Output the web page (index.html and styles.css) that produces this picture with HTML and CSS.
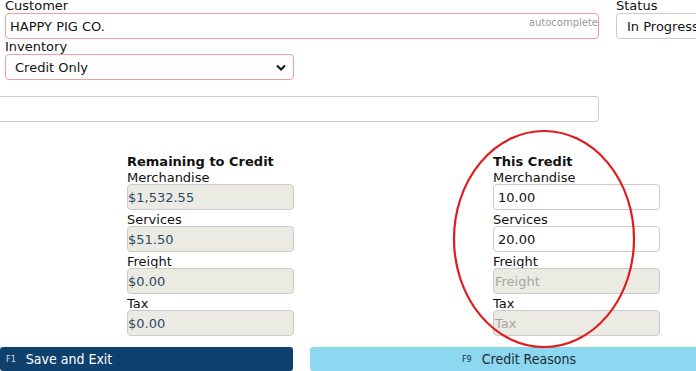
FILE: index.html
```html
<!DOCTYPE html>
<html lang="en">
<head>
  <meta charset="UTF-8">
  <title>Credit</title>
  <link rel="stylesheet" href="styles.css">
</head>
<body>
<div class="page">
  <div class="row-top">
    <div class="field customer">
      <label>Customer</label>
      <div class="box req">
        <span class="val">HAPPY PIG CO.</span>
        <span class="hint">autocomplete</span>
      </div>
    </div>
    <div class="field status">
      <label>Status</label>
      <div class="box"><span class="val">In Progress</span></div>
    </div>
  </div>

  <div class="field inventory">
    <label>Inventory</label>
    <div class="box req select">
      <span class="val">Credit Only</span>
      <svg class="caret" width="10" height="7" viewBox="0 0 10 7"><path d="M1 1.5 L5 5.5 L9 1.5" fill="none" stroke="#111" stroke-width="2"/></svg>
    </div>
  </div>

  <div class="box wide"></div>

  <div class="amounts">
    <div class="col">
      <h3>Remaining to Credit</h3>
      <label>Merchandise</label>
      <div class="box ro">$1,532.55</div>
      <label>Services</label>
      <div class="box ro">$51.50</div>
      <label>Freight</label>
      <div class="box ro">$0.00</div>
      <label>Tax</label>
      <div class="box ro">$0.00</div>
    </div>
    <div class="col marked">
      <h3>This Credit</h3>
      <label>Merchandise</label>
      <div class="box num">10.00</div>
      <label>Services</label>
      <div class="box num">20.00</div>
      <label>Freight</label>
      <div class="box ro ph">Freight</div>
      <label>Tax</label>
      <div class="box ro ph">Tax</div>
      <svg class="circle" width="190" height="224" viewBox="0 0 190 224"><ellipse cx="95" cy="112" rx="90" ry="108" fill="none" stroke="#e3191c" stroke-width="2.2"/></svg>
    </div>
  </div>

  <div class="actions">
    <div class="btn save"><span class="key">F1</span>Save and Exit</div>
    <div class="btn reasons"><span class="key">F9</span>Credit Reasons</div>
  </div>
</div>
</body>
</html>
```

FILE: styles.css
```css
body {
  margin: 0;
  font-family: "DejaVu Sans", Verdana, sans-serif;
  font-size: 13px;
  color: #111;
  background: #fff;
  overflow: hidden;
}
.page {
  margin-top: -2px;
  padding-left: 5px;
}
label {
  display: block;
  line-height: 15px;
  height: 15px;
}
.box {
  box-sizing: border-box;
  height: 26px;
  border: 1px solid #cbcbcb;
  border-radius: 4px;
  background: #fff;
  display: flex;
  align-items: center;
  padding: 0 4px;
  position: relative;
}
.box.req {
  border-color: #f0a09a;
}
.row-top {
  display: flex;
  gap: 17px;
}
.customer {
  width: 594px;
  flex: none;
}
.customer .val {
  flex: 1;
}
.hint {
  font-size: 10px;
  color: #9a9a9a;
  align-self: flex-start;
  margin-top: 3px;
  margin-right: -4px;
}
.status {
  width: 120px;
  flex: none;
}
.status .box {
  padding-left: 10px;
  white-space: nowrap;
  overflow: hidden;
}
.inventory {
  width: 289px;
  margin-top: 0;
}
.select {
  padding-left: 9px;
  justify-content: space-between;
}
.caret {
  margin-right: 3px;
}
.wide {
  margin-top: 16px;
  margin-left: -25px;
  width: 619px;
  border-left: 0;
}
.amounts {
  display: flex;
  gap: 199px;
  padding-left: 122px;
  margin-top: 32px;
}
.col {
  width: 167px;
  position: relative;
}
.col h3 {
  margin: 0;
  font-size: 13px;
  line-height: 15px;
  height: 16px;
}
.col label {
  height: 14px;
  line-height: 15px;
}
.col .box {
  margin-bottom: 2px;
  font-size: 13px;
  padding: 0 4px;
}
.box.ro {
  background: #ebebe4;
  color: #2e4a63;
  padding-left: 0;
}
.box.ph {
  color: #a6a6a0;
  padding-left: 1px;
}
.box.num {
  color: #111;
}
.circle {
  position: absolute;
  left: -44px;
  top: -27px;
  pointer-events: none;
}
.actions {
  display: flex;
  gap: 17px;
  margin-left: -5px;
  margin-top: 9px;
}
.btn {
  height: 24px;
  border-radius: 3px;
  display: flex;
  align-items: center;
  font-family: "DejaVu Sans Condensed", "DejaVu Sans", sans-serif;
  font-size: 14px;
}
.key {
  font-size: 9px;
  margin-right: 10px;
}
.save {
  width: 293px;
  flex: none;
  background: #0f416e;
  color: #fff;
  padding-left: 6px;
  box-sizing: border-box;
}
.save .key {
  color: #d8dde4;
}
.reasons {
  flex: 1;
  background: #8dd8f1;
  color: #1d2a33;
  justify-content: center;
  padding-left: 32px;
  border-top-right-radius: 0;
  border-bottom-right-radius: 0;
}
```
